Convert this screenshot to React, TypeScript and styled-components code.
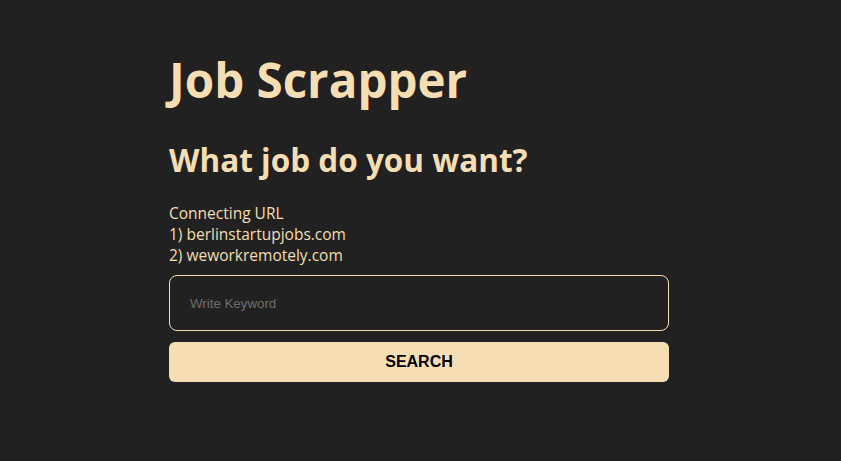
import React, { useState } from "react";
import styled, { createGlobalStyle } from "styled-components";

const GlobalStyle = createGlobalStyle`
  body {
    margin: 0;
    background: #212121;
    font-family: "Open Sans", "Noto Sans CJK KR", sans-serif;
  }
`;

const App: React.FC = () => {
  const [keyword, setKeyword] = useState("");

  return (
    <Page>
      <GlobalStyle />
      <Main>
        <Title>Job Scrapper</Title>
        <Question>What job do you want?</Question>
        <Sources>
          <p>Connecting URL</p>
          <p>1) berlinstartupjobs.com</p>
          <p>2) weworkremotely.com</p>
        </Sources>
        <Form onSubmit={(e) => e.preventDefault()}>
          <KeywordInput
            placeholder="Write Keyword"
            value={keyword}
            onChange={(e) => setKeyword(e.target.value)}
          />
          <SearchButton type="submit">SEARCH</SearchButton>
        </Form>
      </Main>
    </Page>
  );
};

export default App;

const Page = styled.div`
  min-height: 461px;
  padding-right: 3px;
  background: #212121;
  color: #f5deb3;
`;

const Main = styled.main`
  width: 500px;
  margin: 0 auto;
  padding-top: 48px;
`;

const Title = styled.h1`
  margin: 0;
  font-size: 47.5px;
  font-weight: 700;
  line-height: 64px;
`;

const Question = styled.h2`
  margin: 27px 0 0;
  font-size: 31.5px;
  font-weight: 700;
  line-height: 42px;
`;

const Sources = styled.div`
  margin-top: 22px;
  font-size: 15.5px;
  line-height: 21px;
  & p {
    margin: 0;
  }
`;

const Form = styled.form`
  display: flex;
  flex-direction: column;
  gap: 11px;
  margin-top: 9px;
`;

const KeywordInput = styled.input`
  box-sizing: border-box;
  height: 56px;
  padding: 0 20px;
  border: 1px solid #f5deb3;
  border-radius: 8px;
  background: transparent;
  color: #f5deb3;
  font-family: "Liberation Sans", Arial, sans-serif;
  font-size: 13.3px;
  outline: none;
  &::placeholder {
    color: #6e6e6e;
  }
`;

const SearchButton = styled.button`
  height: 40px;
  border: none;
  border-radius: 6px;
  background: #f5deb3;
  color: #000;
  font-family: "Liberation Sans", Arial, sans-serif;
  font-size: 16px;
  font-weight: 700;
  cursor: pointer;
`;
